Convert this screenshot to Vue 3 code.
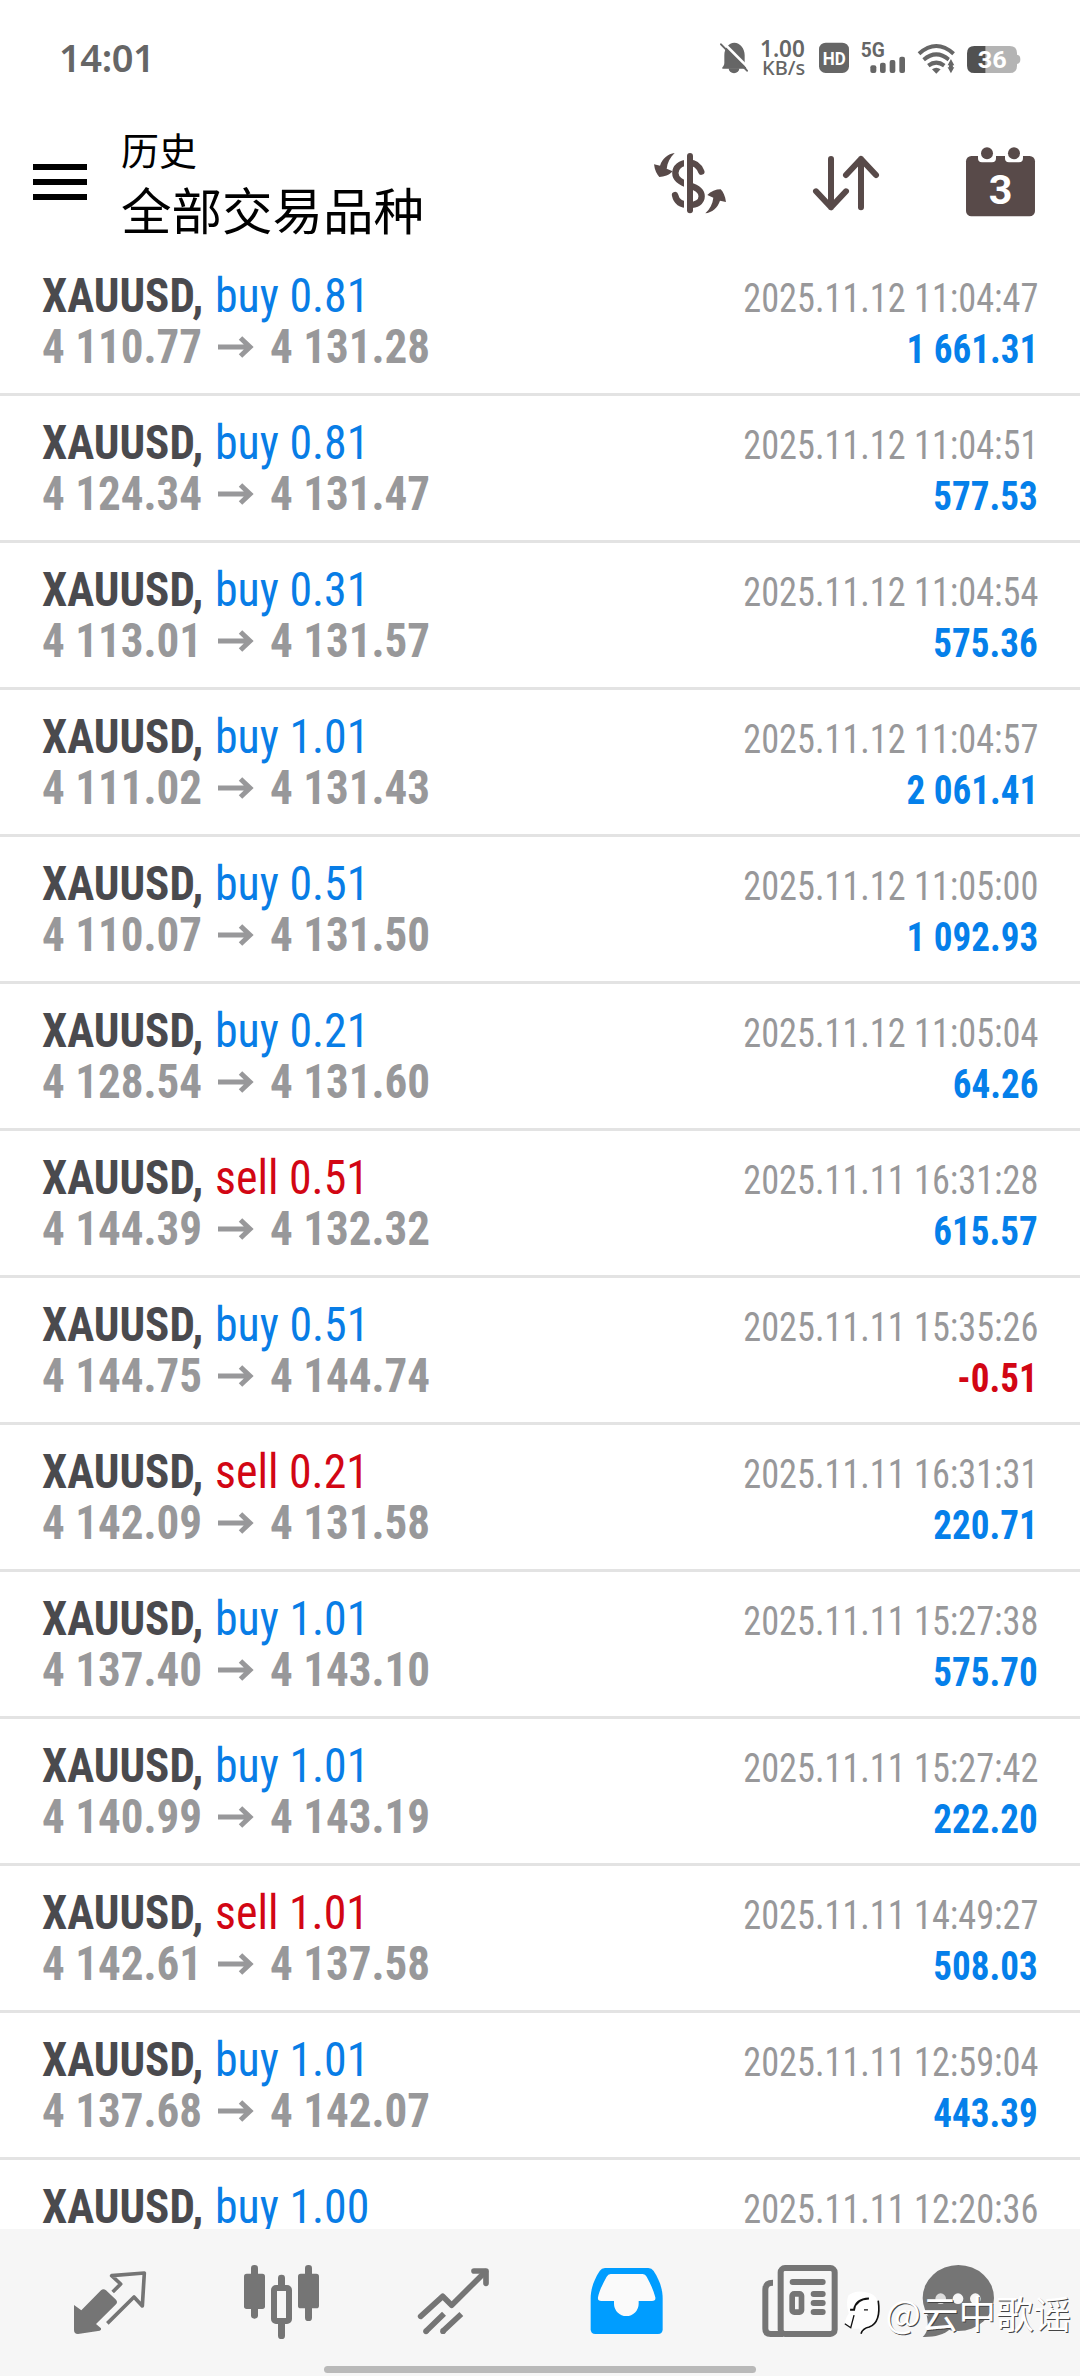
<script setup>
const deals = [
  { side: 'buy', volume: '0.81', open: '4 110.77', close: '4 131.28', time: '2025.11.12 11:04:47', profit: '1 661.31' },
  { side: 'buy', volume: '0.81', open: '4 124.34', close: '4 131.47', time: '2025.11.12 11:04:51', profit: '577.53' },
  { side: 'buy', volume: '0.31', open: '4 113.01', close: '4 131.57', time: '2025.11.12 11:04:54', profit: '575.36' },
  { side: 'buy', volume: '1.01', open: '4 111.02', close: '4 131.43', time: '2025.11.12 11:04:57', profit: '2 061.41' },
  { side: 'buy', volume: '0.51', open: '4 110.07', close: '4 131.50', time: '2025.11.12 11:05:00', profit: '1 092.93' },
  { side: 'buy', volume: '0.21', open: '4 128.54', close: '4 131.60', time: '2025.11.12 11:05:04', profit: '64.26' },
  { side: 'sell', volume: '0.51', open: '4 144.39', close: '4 132.32', time: '2025.11.11 16:31:28', profit: '615.57' },
  { side: 'buy', volume: '0.51', open: '4 144.75', close: '4 144.74', time: '2025.11.11 15:35:26', profit: '-0.51' },
  { side: 'sell', volume: '0.21', open: '4 142.09', close: '4 131.58', time: '2025.11.11 16:31:31', profit: '220.71' },
  { side: 'buy', volume: '1.01', open: '4 137.40', close: '4 143.10', time: '2025.11.11 15:27:38', profit: '575.70' },
  { side: 'buy', volume: '1.01', open: '4 140.99', close: '4 143.19', time: '2025.11.11 15:27:42', profit: '222.20' },
  { side: 'sell', volume: '1.01', open: '4 142.61', close: '4 137.58', time: '2025.11.11 14:49:27', profit: '508.03' },
  { side: 'buy', volume: '1.01', open: '4 137.68', close: '4 142.07', time: '2025.11.11 12:59:04', profit: '443.39' },
  { side: 'buy', volume: '1.00', open: '', close: '', time: '2025.11.11 12:20:36', profit: '' }
]
</script>

<template>
  <div class="screen">
    <div class="status">
      <span class="clock">14:01</span>
      <div class="indicators">
        <svg class="bell" viewBox="58 36 84 96">
          <path d="M65 116V112C69 108 71 104 71 98V76C71 55 84 38 101 38S132 55 132 76V98C132 104 134 109 137 113V116Z" />
          <path d="M84 115a16 15 0 0 0 32 0z" />
          <path d="M66 36L148 118" stroke="#fff" stroke-width="8" />
          <path d="M61 43L139 122" stroke="#666" stroke-width="6" stroke-linecap="round" />
        </svg>
        <div class="speed"><span>1.00</span><small>KB/s</small></div>
        <svg class="hd" viewBox="357 36 90 96">
          <rect x="357" y="38" width="90" height="91" rx="20" />
          <text x="368" y="104" fill="#fff" font-size="56" textLength="69" lengthAdjust="spacingAndGlyphs">HD</text>
        </svg>
        <svg class="signal" viewBox="482 36 132 96">
          <text x="481" y="82" font-size="58" textLength="72" lengthAdjust="spacingAndGlyphs">5G</text>
          <rect x="510" y="106" width="18" height="23" rx="6" />
          <rect x="539" y="98" width="17" height="31" rx="6" />
          <rect x="568" y="90" width="17" height="39" rx="6" />
          <rect x="597" y="80" width="17" height="49" rx="6" />
        </svg>
        <svg class="wifi" viewBox="654 36 110 96">
          <g fill="none" stroke="#666" stroke-width="12">
            <path d="M657 71Q709 25 761 71" />
            <path d="M671 89Q709 57 747 89" />
            <path d="M685 107Q709 89 733 107" />
          </g>
          <path d="M696 118Q709 108 722 118L709 131Z" />
          <path d="M753 86L763 106V112L753 130L743 112V106Z" stroke="#fff" stroke-width="8" />
          <path d="M753 87L763 106H743ZM753 130L763 112H743Z" />
        </svg>
        <svg class="battery" viewBox="800 36 160 96">
          <path d="M822 48H928Q950 48 950 70V74Q960 75 960 88T950 102V107Q950 129 928 129H822Z" fill="#b4b4b4" />
          <path d="M855 48H822Q800 48 800 70V107Q800 129 822 129H855Z" fill="#515151" />
          <text x="832" y="113" fill="#fff" font-size="72" textLength="87" lengthAdjust="spacingAndGlyphs">36</text>
        </svg>
      </div>
    </div>

    <header class="header">
      <button class="menu" aria-label="menu"><i></i><i></i><i></i></button>
      <div class="titles">
        <span class="section">历史</span>
        <span class="filter">全部交易品种</span>
      </div>
      <div class="actions">
        <svg class="currency" viewBox="42 20 216 208">
          <path d="M184 94C176 75 165 67 148 67C119 67 106 82 106 98C106 117 122 127 148 135C174 143 185 153 185 168C185 185 170 194 148 194C124 194 109 183 105 164" fill="none" stroke="#584a49" stroke-width="19" stroke-linecap="round" />
          <rect x="132" y="50" width="10" height="156" fill="#fff" />
          <rect x="141" y="38" width="18" height="181" rx="9" />
          <path d="M104 38C84 41 67 54 60 76L42 72C44 90 51 103 58 110C72 110 88 104 98 93L80 85C82 66 90 52 104 38Z" />
          <path transform="rotate(180 150 128.5)" d="M104 38C84 41 67 54 60 76L42 72C44 90 51 103 58 110C72 110 88 104 98 93L80 85C82 66 90 52 104 38Z" />
        </svg>
        <svg class="sort" viewBox="519 20 198 208">
          <path d="M573 56V201M528 153L573 201L618 153M663 201V56M618 104L663 56L708 104" fill="none" stroke="#584a49" stroke-width="18" stroke-linecap="round" stroke-linejoin="round" />
        </svg>
        <svg class="calendar" viewBox="978 20 207 208">
          <rect x="978" y="47" width="207" height="181" rx="16" />
          <path d="M1014 40H1068V54Q1068 66 1056 66H1026Q1014 66 1014 54ZM1095 40H1149V54Q1149 66 1137 66H1107Q1095 66 1095 54Z" fill="#fff" />
          <circle cx="1041" cy="39" r="18" />
          <circle cx="1122" cy="39" r="18" />
          <text x="1082" y="191" text-anchor="middle" fill="#fff" font-size="124">3</text>
        </svg>
      </div>
    </header>

    <main class="list">
      <article v-for="(d, i) in deals" :key="i" class="deal">
        <div class="line">
          <div class="left">
            <span class="symbol">XAUUSD,</span>
            <span class="side" :class="d.side">{{ d.side }} {{ d.volume }}</span>
          </div>
          <span class="time">{{ d.time }}</span>
        </div>
        <div v-if="d.open" class="line">
          <div class="left">
            <span class="price">{{ d.open }}</span>
            <svg class="arrow" viewBox="0 0 35 22"><path d="M0 11H32M22.500 2L32 11L22.500 20" /></svg>
            <span class="price">{{ d.close }}</span>
          </div>
          <span class="profit" :class="{ loss: d.profit.startsWith('-') }">{{ d.profit }}</span>
        </div>
      </article>
    </main>

    <nav class="tabs">
      <div class="tab-row">
        <svg viewBox="195 231 270 270">
          <path d="M222 375L244 391L303 331Q310 324 318 331L348 359Q354 366 348 373L288 432L303 445Q305 450 299 452L234 462Q222 462 222 450Z" />
          <path d="M338 336L362 312L335 287L433 279L427 378L402 351L322 430" fill="none" stroke="#757575" stroke-width="11" stroke-linejoin="round" />
        </svg>
        <svg viewBox="711 231 270 270">
          <rect x="732" y="281" width="63" height="106" rx="8" />
          <rect x="753" y="255" width="21" height="161" rx="10" />
          <rect x="894" y="281" width="63" height="104" rx="8" />
          <rect x="915" y="255" width="21" height="168" rx="10" />
          <rect x="834" y="284" width="21" height="60" rx="10" />
          <rect x="834" y="410" width="21" height="67" rx="10" />
          <rect x="822" y="324" width="45" height="99" rx="6" fill="#f6f6f6" stroke="#757575" stroke-width="18" />
        </svg>
        <svg viewBox="147 231 270 270">
          <g fill="none" stroke="#757575" stroke-width="17" stroke-linejoin="round">
            <path d="M182 409L248 349L275 376L376 275" stroke-linecap="round" />
            <path d="M342 273H378V310" stroke-linecap="round" />
            <path d="M198 454L252 401M248 454L304 402" />
          </g>
          <circle cx="198" cy="454" r="8.500" /><circle cx="249" cy="453.500" r="8.500" />
        </svg>
        <svg viewBox="663 231 270 270">
          <path d="M735 264H865Q875 264 881 273C900 302 908 330 908 355V448Q908 462 894 462H706Q692 462 692 448V355C692 330 700 302 719 273Q725 264 735 264Z" fill="#009dff" />
          <path d="M752 282H848Q856 282 860 290C872 312 881 332 886 352Q888 363 876 363H836V371A37 37 0 0 1 762 371V363H724Q712 363 714 352C718 332 728 312 740 290Q744 282 752 282Z" fill="#fafafa" />
        </svg>
        <svg viewBox="99 231 270 270">
          <path d="M159 308C142 308 136 316 136 330V446Q136 462 152 462H190" fill="none" stroke="#757575" stroke-width="18" />
          <rect x="182" y="264" width="162" height="198" rx="13" fill="#f6f6f6" stroke="#757575" stroke-width="18" />
          <path d="M218 306H308M281 342H308M281 369H308M281 396H308" stroke="#757575" stroke-width="18" stroke-linecap="round" />
          <rect x="216.500" y="341.500" width="28" height="55" rx="6" fill="#f6f6f6" stroke="#757575" stroke-width="17" />
        </svg>
        <svg viewBox="615 231 270 270">
          <ellipse cx="715" cy="354" rx="107" ry="99" />
          <path d="M608 471C620 459 628 445 620 405L690 448C672 465 642 472 608 471Z" />
          <circle cx="662" cy="356" r="16" fill="#dcdcdc" />
          <circle cx="714" cy="356" r="16" fill="#f6f6f6" />
          <circle cx="766" cy="356" r="16" fill="#f6f6f6" />
        </svg>
      </div>
      <div class="home"></div>
      <div class="author">
        <svg viewBox="32 46 108 136">
          <path d="M45 62Q70 42 110 56Q138 66 138 110Q138 150 100 166L84 178L78 162Q46 168 34 146Q38 126 46 118Q36 84 45 62Z" fill="#fff" />
          <path d="M50 106H62C65 86 80 73 107 72" fill="none" stroke="#111" stroke-width="6" />
          <path d="M92 106H104M62 122L52 160L34 148" fill="none" stroke="#111" stroke-width="4" />
          <path d="M135 78C140 112 138 146 108 158Q88 162 83 178" fill="none" stroke="#111" stroke-width="5" />
        </svg>
        <span>@云中歌谣</span>
      </div>
    </nav>
  </div>
</template>

<style>
body {
  margin: 0;
  background: #fff;
}
</style>

<style scoped>
.screen {
  display: flex;
  flex-direction: column;
  width: 1080px;
  height: 2376px;
  overflow: hidden;
  background: #fff;
  font-family: "Roboto Condensed", Roboto, sans-serif;
}
svg {
  display: block;
  flex: none;
  overflow: visible;
}

.status {
  display: flex;
  align-items: center;
  justify-content: space-between;
  flex: none;
  height: 116px;
  padding: 0 60px 0 59px;
  color: #666;
  fill: #666;
}
.clock {
  font: 600 38px/52px "Noto Sans", sans-serif;
  letter-spacing: -0.4px;
  padding-bottom: 2px;
}
.indicators {
  display: flex;
  align-items: center;
}
.indicators svg {
  height: 32px;
}
.indicators text {
  font-family: Roboto, sans-serif;
  font-weight: 700;
}
.bell { width: 28px; }
.speed {
  display: flex;
  flex-direction: column;
  width: 47px;
  margin: 0 12px;
  font: 600 22.500px/19px "Noto Sans", sans-serif;
}
.speed small {
  padding-left: 2px;
  font-size: 20px;
  font-weight: 500;
}
.hd { width: 30px; }
.signal {
  width: 44px;
  margin-left: 12px;
}
.wifi {
  width: 36.600px;
  margin: 0 12px 0 13px;
}
.battery { width: 53.400px; }

.header {
  display: flex;
  align-items: center;
  flex: none;
  height: 131px;
  margin-bottom: 2px;
  padding: 0 45px 0 33px;
}
.menu {
  display: flex;
  flex-direction: column;
  gap: 9px;
  width: 54px;
  padding: 0;
  border: 0;
  background: none;
}
.menu i {
  height: 6px;
  background: #000;
}
.titles {
  display: flex;
  flex-direction: column;
  margin-left: 34px;
  padding-bottom: 3px;
  color: #000;
  font-family: "Noto Sans CJK SC", sans-serif;
}
.section {
  font-size: 38px;
  line-height: 56px;
}
.filter {
  font-size: 50.500px;
  line-height: 62px;
}
.actions {
  display: flex;
  gap: 87px;
  margin-left: auto;
  fill: #584a49;
}
.actions svg { height: 69.300px; }
.currency { width: 72px; }
.sort { width: 66px; }
.calendar { width: 69px; }
.calendar text {
  font-family: Roboto, sans-serif;
  font-weight: 700;
}

.list {
  flex: 1;
  min-height: 0;
  overflow: hidden;
}
.deal {
  box-sizing: border-box;
  height: 147px;
  padding: 21px 42px 0;
  border-bottom: 3px solid #e3e3e3;
}
.line {
  display: flex;
  align-items: baseline;
  justify-content: space-between;
  height: 51px;
  line-height: 51px;
  white-space: nowrap;
}
.left {
  display: flex;
  align-items: baseline;
  font-size: 48px;
}
.symbol,
.side,
.price {
  display: block;
  transform: scaleX(0.938);
  transform-origin: 0 50%;
}
.symbol {
  width: 172.500px;
  color: #4a4a4e;
  font-weight: 700;
}
.side {
  font-weight: 450;
  transform: scaleX(0.955);
}
.buy { color: #087de6; }
.sell { color: #d20614; }
.price {
  width: 176px;
  color: #98989a;
  font-weight: 700;
}
.arrow {
  align-self: center;
  width: 35px;
  height: 22px;
  margin-right: 17px;
  fill: none;
  stroke: #98989a;
  stroke-width: 5;
}
.time,
.profit {
  display: block;
  color: #98989a;
  font-size: 40px;
  font-weight: 450;
  transform: scaleX(0.907);
  transform-origin: 100% 50%;
}
.profit {
  color: #0580ea;
  font-weight: 700;
  transform: scaleX(0.927);
}
.loss { color: #d20614; }

.tabs {
  position: relative;
  display: flex;
  flex-direction: column;
  flex: none;
  box-sizing: border-box;
  height: 147px;
  padding-top: 28px;
  background: #f6f6f6;
}
.tab-row {
  display: flex;
  gap: 82px;
  padding-left: 65px;
  fill: #757575;
}
.tab-row svg {
  width: 90px;
  height: 90px;
}
.home {
  width: 432px;
  height: 7px;
  margin: 19px auto 0;
  border-radius: 4px;
  background: #b9b9b9;
}
.author {
  position: absolute;
  right: 9px;
  bottom: 37px;
  display: flex;
  align-items: center;
  gap: 6px;
  height: 54px;
  color: #fff;
  font: 400 37.500px/54px "Noto Sans CJK SC", sans-serif;
  text-shadow: 1px 1px 0 #444;
}
.author svg {
  width: 36px;
  height: 45px;
}
</style>
